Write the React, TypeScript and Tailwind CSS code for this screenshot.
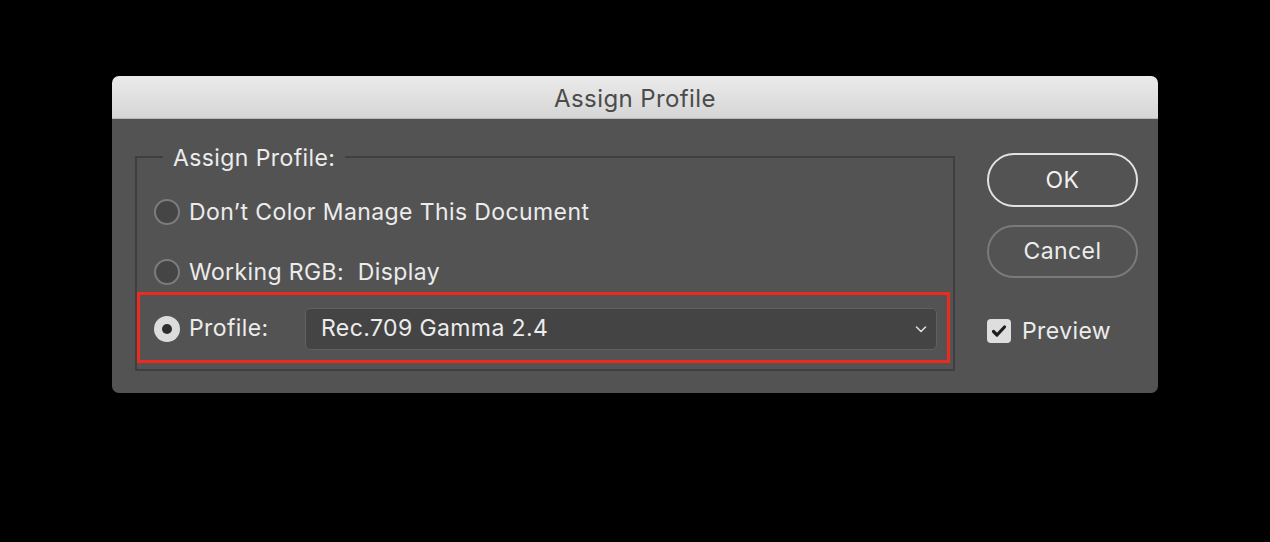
export default function App() {
  const font = { fontFamily: 'Inter, "Liberation Sans", sans-serif' };

  return (
    <div className="min-h-[542px] w-full bg-black pt-[76px]" style={font}>
      <div className="mx-auto w-[1046px] overflow-hidden rounded-[7px]">
        {/* title bar */}
        <div className="flex h-[43px] items-center justify-center border-b border-[#b9b9b9] bg-gradient-to-b from-[#ebebeb] to-[#d6d6d6] pt-[3px]">
          <span className="text-[24px] tracking-[0.4px] text-[#4b4b4b]">Assign Profile</span>
        </div>

        {/* body */}
        <div className="flex h-[274px] bg-[#535353] pl-[23px] pr-[20px] pt-[37px] text-[23px] tracking-[0.4px] text-[#ececec]">
          <div className="flex h-[215px] w-[820px] flex-col border-2 border-[#3f3f3f]">
            <div className="-mt-[13px] ml-[26px] w-fit bg-[#535353] px-[10px] leading-[26px]">Assign Profile:</div>

            <div className="mt-[26px] flex h-[30px] items-center gap-[9px] pl-[17px]">
              <Radio />
              <span>Don’t Color Manage This Document</span>
            </div>

            <div className="mt-[30px] flex h-[30px] items-center gap-[9px] pl-[17px]">
              <Radio />
              <span>Working RGB:&nbsp; Display</span>
            </div>

            <div className="mr-[3px] mt-[5px] flex h-[71px] items-center border-[3px] border-[#ee2a1e] pl-[14px] pr-[10px] pt-[2px]">
              <Radio checked />
              <span className="ml-[9px] w-[116px]">Profile:</span>
              <div className="flex h-[42px] flex-1 items-center justify-between rounded-[5px] border border-[#606060] bg-[#444444] pl-[15px] pr-[8px]">
                <span>Rec.709 Gamma 2.4</span>
                <svg width="14" height="14" viewBox="0 0 14 14" fill="none">
                  <path d="M2.5 5l4.5 4.5L11.5 5" stroke="#dcdcdc" strokeWidth="1.6" strokeLinecap="round" strokeLinejoin="round" />
                </svg>
              </div>
            </div>
          </div>

          <div className="-mt-[3px] ml-auto flex w-[151px] flex-col">
            <button className="h-[54px] w-full rounded-full border-2 border-[#e2e2e2] text-[23px] text-[#f0f0f0]">OK</button>
            <button className="mt-[18px] h-[53px] w-full rounded-full border-2 border-[#7a7a7a] text-[23px] text-[#ececec]">Cancel</button>
            <div className="mt-[36px] flex items-center gap-[11px]">
              <div className="flex h-[24px] w-[24px] items-center justify-center rounded-[4px] bg-[#dedede]">
                <svg width="18" height="18" viewBox="0 0 18 18" fill="none">
                  <path d="M3.5 9.5l3.5 3.5L14.5 5" stroke="#1e1e1e" strokeWidth="3.2" strokeLinecap="round" strokeLinejoin="round" />
                </svg>
              </div>
              <span>Preview</span>
            </div>
          </div>
        </div>
      </div>
    </div>
  );
}

function Radio({ checked = false }: { checked?: boolean }) {
  if (checked) {
    return (
      <span className="flex h-[26px] w-[26px] shrink-0 items-center justify-center rounded-full bg-[#dcdcdc]">
        <span className="h-[10px] w-[10px] rounded-full bg-[#2e2e2e]" />
      </span>
    );
  }
  return <span className="h-[26px] w-[26px] shrink-0 rounded-full border-2 border-[#7c7c7c] bg-[#454545]" />;
}
